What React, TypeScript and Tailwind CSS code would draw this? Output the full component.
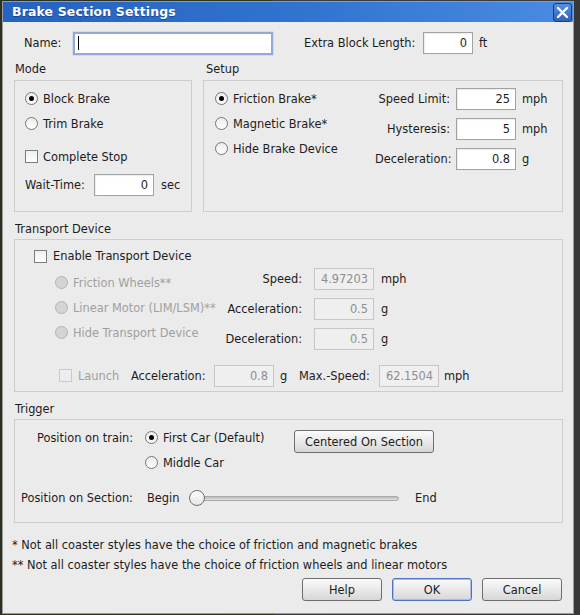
import React from 'react';

type RadioProps = { label: string; checked?: boolean; disabled?: boolean };

function Radio({ label, checked, disabled }: RadioProps) {
  return (
    <div className="flex items-center h-[25px] gap-[5px] whitespace-nowrap">
      {disabled ? (
        <span className="w-[13px] h-[13px] rounded-full border border-[#b2b2b2] bg-[#d4d4d4] shrink-0" />
      ) : (
        <span className="w-[13px] h-[13px] rounded-full border border-[#767676] bg-[linear-gradient(180deg,#ececec,#ffffff)] flex items-center justify-center shrink-0">
          {checked && <span className="w-[5px] h-[5px] rounded-full bg-black" />}
        </span>
      )}
      <span className={disabled ? 'text-[#a0a0a0]' : ''}>{label}</span>
    </div>
  );
}

function Check({ disabled }: { disabled?: boolean }) {
  return disabled ? (
    <span className="w-[13px] h-[13px] border border-[#cacaca] bg-[#ededed] shrink-0" />
  ) : (
    <span className="w-[13px] h-[13px] border border-[#7c7c7c] bg-[linear-gradient(180deg,#efefef,#ffffff)] shrink-0" />
  );
}

function Field({ value, disabled, wide }: { value: string; disabled?: boolean; wide?: boolean }) {
  return disabled ? (
    <div className="w-[60px] h-[22px] border border-[#c6c6c6] bg-[#efefef] text-[#8e8e8e] flex items-center justify-end pr-[5px] shrink-0">
      {value}
    </div>
  ) : (
    <div
      className={
        (wide ? 'w-[50px] ' : 'w-[60px] ') +
        'h-[22px] border border-[#a2a2a2] bg-white shadow-[inset_1px_1px_1px_rgba(0,0,0,0.08)] flex items-center justify-end pr-[5px] shrink-0'
      }
    >
      {value}
    </div>
  );
}

function Button({ label, focused }: { label: string; focused?: boolean }) {
  return (
    <div
      className={
        (focused ? 'border-[#4f73c2] shadow-[inset_0_0_0_1px_#a9bde8] ' : 'border-[#6e6e6e] ') +
        'w-[80px] h-[23px] rounded-[3px] border bg-[linear-gradient(180deg,#fbfbfb,#e6e6e6_60%,#d6d6d6)] flex items-center justify-center'
      }
    >
      {label}
    </div>
  );
}

function SetupRow({ label, value, unit }: { label: string; value: string; unit: string }) {
  return (
    <div className="flex items-center h-[22px]">
      <span className="w-[75px] text-right whitespace-nowrap">{label}</span>
      <div className="ml-[6px]"><Field value={value} /></div>
      <span className="ml-[6px] w-[36px]">{unit}</span>
    </div>
  );
}

function TransportRow({ label, value, unit }: { label: string; value: string; unit: string }) {
  return (
    <div className="flex items-center h-[22px]">
      <span className="w-[90px] text-right whitespace-nowrap">{label}</span>
      <div className="ml-[12px]"><Field value={value} disabled /></div>
      <span className="ml-[7px]">{unit}</span>
    </div>
  );
}

export default function App() {
  return (
    <div className="w-[580px] h-[615px] overflow-hidden bg-[linear-gradient(90deg,#2b3020_0%,#30351f_47%,#3b3d3e_47%,#383838_100%)] pt-[2px] pl-[3px] font-['DejaVu_Sans','Liberation_Sans',sans-serif] text-[11.4px] leading-[14px] text-[#1c1c1c]">
      <div className="w-[570px] h-[611px] flex flex-col bg-[#ebebeb] shadow-[0_0_0_1px_#9a9a9a]">
        {/* title bar */}
        <div className="h-[20px] flex items-center justify-between bg-[linear-gradient(90deg,#2662c0_0%,#3274d0_55%,#4a8ce2_100%)] pl-[9px] pr-[1px]">
          <span className="text-white font-bold text-[12.4px] tracking-[0.2px] [text-shadow:0_1px_1px_rgba(0,0,0,0.35)]">
            Brake Section Settings
          </span>
          <div className="w-[19px] h-[19px] rounded-[3px] border border-[#1d3d7a] bg-[linear-gradient(180deg,#5b8fdc,#2f62b8)] flex items-center justify-center">
            <svg width="13" height="13" viewBox="0 0 13 13">
              <path d="M2 2 L11 11 M11 2 L2 11" stroke="white" strokeWidth="2.4" strokeLinecap="round" />
            </svg>
          </div>
        </div>

        <div className="flex flex-col pl-[11px] pr-[10px]">
          {/* name row */}
          <div className="flex items-center h-[22px] mt-[10px]">
            <span className="ml-[10px] w-[49px]">Name:</span>
            <div className="w-[200px] h-[23px] border-2 border-[#93a9dc] bg-white flex items-center pl-[3px] shadow-[0_0_1px_#6c86c4]">
              <span className="w-[1px] h-[14px] bg-black" />
            </div>
            <span className="ml-[31px] w-[119px]">Extra Block Length:</span>
            <Field value="0" wide />
            <span className="ml-[6px]">ft</span>
          </div>

          {/* mode / setup */}
          <div className="flex gap-[11px] mt-[8px]">
            <div className="w-[178px] flex flex-col">
              <span className="pl-[1px] h-[14px]">Mode</span>
              <div className="mt-[4px] h-[132px] border border-[#cdcdcd] pl-[10px] pt-[5px] flex flex-col">
                <Radio label="Block Brake" checked />
                <Radio label="Trim Brake" />
                <div className="flex items-center h-[25px] gap-[5px] mt-[8px]">
                  <Check />
                  <span>Complete Stop</span>
                </div>
                <div className="flex items-center h-[25px] mt-[3px]">
                  <span className="w-[69px]">Wait-Time:</span>
                  <Field value="0" />
                  <span className="ml-[7px]">sec</span>
                </div>
              </div>
            </div>
            <div className="flex-1 flex flex-col">
              <span className="pl-[3px] h-[14px]">Setup</span>
              <div className="mt-[4px] h-[132px] border border-[#cdcdcd] pl-[11px] pr-[4px] flex justify-between">
                <div className="flex flex-col pt-[5px]">
                  <Radio label="Friction Brake*" checked />
                  <Radio label="Magnetic Brake*" />
                  <Radio label="Hide Brake Device" />
                </div>
                <div className="flex flex-col gap-[8px] pt-[7px]">
                  <SetupRow label="Speed Limit:" value="25" unit="mph" />
                  <SetupRow label="Hysteresis:" value="5" unit="mph" />
                  <SetupRow label="Deceleration:" value="0.8" unit="g" />
                </div>
              </div>
            </div>
          </div>

          {/* transport device */}
          <span className="pl-[1px] h-[14px] mt-[10px]">Transport Device</span>
          <div className="mt-[3px] h-[153px] border border-[#cdcdcd] pl-[19px] pt-[5px] flex flex-col">
            <div className="flex items-center h-[22px] gap-[6px]">
              <Check />
              <span>Enable Transport Device</span>
            </div>
            <div className="flex">
              <div className="w-[157px] ml-[21px] flex flex-col pt-[3px]">
                <Radio label="Friction Wheels**" disabled />
                <Radio label="Linear Motor (LIM/LSM)**" disabled />
                <Radio label="Hide Transport Device" disabled />
              </div>
              <div className="flex flex-col gap-[8px] pt-[1px]">
                <TransportRow label="Speed:" value="4.97203" unit="mph" />
                <TransportRow label="Acceleration:" value="0.5" unit="g" />
                <TransportRow label="Deceleration:" value="0.5" unit="g" />
              </div>
            </div>
            <div className="flex items-center h-[21px] mt-[15px] ml-[25px]">
              <Check disabled />
              <span className="ml-[6px] w-[53px] text-[#a0a0a0]">Launch</span>
              <span className="w-[83px]">Acceleration:</span>
              <Field value="0.8" disabled />
              <span className="ml-[6px] w-[19px]">g</span>
              <span className="w-[80px]">Max.-Speed:</span>
              <Field value="62.1504" disabled />
              <span className="ml-[5px]">mph</span>
            </div>
          </div>

          {/* trigger */}
          <span className="pl-[1px] h-[14px] mt-[10px]">Trigger</span>
          <div className="mt-[3px] h-[104px] border border-[#cdcdcd] pt-[5px] flex flex-col">
            <div className="flex items-start pl-[22px]">
              <span className="w-[108px] h-[25px] flex items-center">Position on train:</span>
              <div className="w-[149px] flex flex-col">
                <Radio label="First Car (Default)" checked />
                <Radio label="Middle Car" />
              </div>
              <div className="mt-[5px] w-[140px] h-[23px] rounded-[3px] border border-[#6e6e6e] bg-[linear-gradient(180deg,#fbfbfb,#e6e6e6_60%,#d6d6d6)] flex items-center justify-center">
                Centered On Section
              </div>
            </div>
            <div className="flex items-center h-[22px] mt-[12px] pl-[6px]">
              <span className="w-[126px]">Position on Section:</span>
              <span className="w-[32px]">Begin</span>
              <div className="ml-[10px] w-[212px] h-[18px] relative flex items-center">
                <div className="ml-[8px] w-[202px] h-[5px] rounded-full border border-[#a9a9a9] bg-[linear-gradient(180deg,#b9b9b9,#e2e2e2)]" />
                <div className="absolute left-0 top-[1px] w-[16px] h-[16px] rounded-full border border-[#6f6f6f] bg-[linear-gradient(180deg,#ffffff,#e4e4e4)]" />
              </div>
              <span className="ml-[14px]">End</span>
            </div>
          </div>

          {/* footnotes */}
          <span className="mt-[15px] -ml-[2px] h-[14px]">* Not all coaster styles have the choice of friction and magnetic brakes</span>
          <span className="mt-[6px] -ml-[2px] h-[14px]">** Not all coaster styles have the choice of friction wheels and linear motors</span>

          {/* buttons */}
          <div className="flex justify-end gap-[10px] mt-[6px] pr-[1px]">
            <Button label="Help" />
            <Button label="OK" focused />
            <Button label="Cancel" />
          </div>
        </div>
      </div>
    </div>
  );
}
